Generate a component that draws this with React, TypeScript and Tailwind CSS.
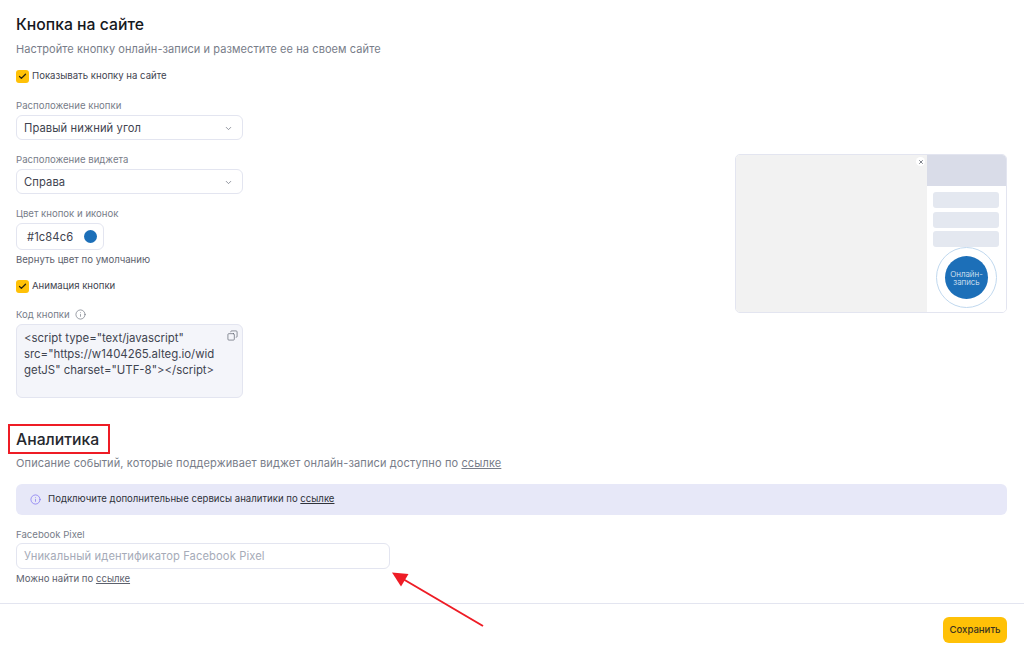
import * as React from "react";
import { ChevronDown, Check, Info, Copy, X } from "lucide-react";

const FieldLabel = ({ children }: { children: React.ReactNode }) => (
  <div className="pt-[1px] text-[9.6px] leading-[13px] text-[#787d89]">{children}</div>
);

const CheckRow = ({ label }: { label: string }) => (
  <div className="flex h-[14px] items-center gap-[3px]">
    <span className="flex h-[13px] w-[13px] items-center justify-center rounded-[3px] bg-[#ffc107]">
      <Check size={9} strokeWidth={3.5} className="text-[#2a2510]" />
    </span>
    <span className="text-[9.6px] leading-[14px] text-[#3f4450]">{label}</span>
  </div>
);

const SelectBox = ({ value }: { value: string }) => (
  <div className="mt-[3px] flex h-[25px] w-[227px] items-center justify-between rounded-[6px] border border-[#e3e5f0] bg-white pl-[7px] pr-[9px] pt-[1px] text-[11.2px] tracking-[0.1px] text-[#3f4450]">
    <span>{value}</span>
    <ChevronDown size={9} strokeWidth={2} className="text-[#6f7480]" />
  </div>
);

const WidgetPreview = () => (
  <div className="mr-[17px] mt-[154px] flex h-[159px] w-[272px] overflow-hidden rounded-[5px] border border-[#e3e5f0] bg-white">
    <div className="relative flex-1 bg-[#f2f2f2]">
      <span className="absolute right-[2px] top-[2px] flex h-[9px] w-[9px] items-center justify-center rounded-full bg-white">
        <X size={6} strokeWidth={3} className="text-[#555b66]" />
      </span>
    </div>
    <div className="flex w-[79px] flex-col bg-white">
      <div className="h-[31px] bg-[#d9dce8]" />
      <div className="flex flex-col gap-[3.5px] pl-[6px] pr-[7px] pt-[6px]">
        <div className="h-[16px] rounded-[3px] bg-[#e4e8f0]" />
        <div className="h-[16px] rounded-[3px] bg-[#e4e8f0]" />
        <div className="h-[16px] rounded-[3px] bg-[#e4e8f0]" />
      </div>
      <div className="mx-auto flex h-[61px] w-[61px] items-center justify-center rounded-full border-[1.5px] border-[#c0d8ee] bg-white">
        <div className="flex h-[43px] w-[43px] items-center justify-center rounded-full bg-[#1c6fb8] text-center text-[8px] font-light leading-[8px] text-[#e6eff8]">
          Онлайн-
          <br />
          запись
        </div>
      </div>
    </div>
  </div>
);

export default function App() {
  return (
    <div
      className="relative flex h-[663px] w-[1024px] flex-col overflow-hidden bg-white"
      style={{ fontFamily: "Inter, 'Noto Sans', sans-serif" }}
    >
      <div className="flex-1 pl-[16px]">
        <div className="flex justify-between">
          <div>
            <h1 className="pt-[14px] text-[15.75px] font-medium leading-[22px] text-[#16181d]">Кнопка на сайте</h1>
            <p className="mt-[6px] whitespace-nowrap text-[11px] leading-[14px] tracking-[0.08px] text-[#787d89]">
              Настройте кнопку онлайн-записи и разместите ее на своем сайте
            </p>
            <div className="mt-[13px]">
              <CheckRow label="Показывать кнопку на сайте" />
            </div>
            <div className="mt-[15px]">
              <FieldLabel>Расположение кнопки</FieldLabel>
              <SelectBox value="Правый нижний угол" />
            </div>
            <div className="mt-[12px]">
              <FieldLabel>Расположение виджета</FieldLabel>
              <SelectBox value="Справа" />
            </div>
            <div className="mt-[12px]">
              <FieldLabel>Цвет кнопок и иконок</FieldLabel>
              <div className="mt-[3px] flex h-[27px] w-[88px] items-center justify-between rounded-[6px] border border-[#e3e5f0] bg-white pl-[10px] pr-[6px] text-[11.2px] tracking-[0.1px] text-[#3f4450]">
                <span className="pt-[2px]">#1c84c6</span>
                <span className="h-[13px] w-[13px] rounded-full bg-[#1c6fb8]" />
              </div>
              <div className="mt-[3px] text-[9.6px] leading-[14px] text-[#5c616d]">Вернуть цвет по умолчанию</div>
            </div>
            <div className="mt-[12px]">
              <CheckRow label="Анимация кнопки" />
            </div>
            <div className="mt-[14px]">
              <div className="flex items-center gap-[5px]">
                <FieldLabel>Код кнопки</FieldLabel>
                <Info size={11} strokeWidth={1.5} className="text-[#6f7480]" />
              </div>
              <div className="relative mt-[3px] h-[74px] w-[227px] rounded-[6px] border border-[#e3e5f0] bg-[#f4f5fa] pl-[7px] pt-[5px] text-[11.4px] leading-[16px] text-[#3f4450]">
                <div className="whitespace-nowrap">&lt;script type="text/javascript"</div>
                <div className="whitespace-nowrap">src="https://w1404265.alteg.io/wid</div>
                <div className="whitespace-nowrap">getJS" charset="UTF-8"&gt;&lt;/script&gt;</div>
                <Copy size={11} strokeWidth={1.5} className="absolute right-[4px] top-[5px] -scale-x-100 text-[#5c616d]" />
              </div>
            </div>
          </div>
          <WidgetPreview />
        </div>

        <h2 className="-ml-[8px] mt-[26px] flex h-[30px] w-[102px] items-center border-2 border-[#ee1c25] pl-[6px] pt-[1px] text-[15.75px] font-medium leading-[22px] text-[#26282e]">
          Аналитика
        </h2>
        <p className="mt-[2px] text-[11px] leading-[14px] tracking-[0.13px] text-[#787d89]">
          Описание событий, которые поддерживает виджет онлайн-записи доступно по <span className="underline">ссылке</span>
        </p>
        <div className="mr-[17px] mt-[14px] flex h-[31px] items-center gap-[7px] rounded-[6px] bg-[#e7e8f8] pl-[14px] text-[9.6px] text-[#2f323a]">
          <Info size={11} strokeWidth={1.5} className="text-[#7a6cf0]" />
          <span>
            Подключите дополнительные сервисы аналитики по <span className="underline">ссылке</span>
          </span>
        </div>
        <div className="mt-[12px]">
          <FieldLabel>Facebook Pixel</FieldLabel>
          <div className="mt-[2px] flex h-[26px] w-[374px] items-center rounded-[6px] border border-[#e3e5f0] bg-white pl-[7px] pt-[1px] text-[11.2px] tracking-[0.1px] text-[#a6abb8]">
            Уникальный идентификатор Facebook Pixel
          </div>
          <div className="mt-[3px] text-[9.6px] leading-[14px] text-[#5c616d]">
            Можно найти по <span className="underline">ссылке</span>
          </div>
        </div>
      </div>

      <div className="flex h-[60px] items-start justify-end border-t border-[#e3e5f0] pr-[17px] pt-[13px]">
        <button className="flex h-[26px] w-[64px] items-center justify-center rounded-[6px] bg-[#ffc107] text-[9.6px] font-medium text-[#3a3320]">
          Сохранить
        </button>
      </div>

      {/* red annotation arrow */}
      <svg className="absolute left-[385px] top-[565px]" width="105" height="68" viewBox="0 0 105 68" fill="none">
        <path d="M98 61 L18 14" stroke="#ee1c25" strokeWidth="2" />
        <path d="M7 7.5 L23.5 9 L16 21.5 Z" fill="#ee1c25" />
      </svg>
    </div>
  );
}
